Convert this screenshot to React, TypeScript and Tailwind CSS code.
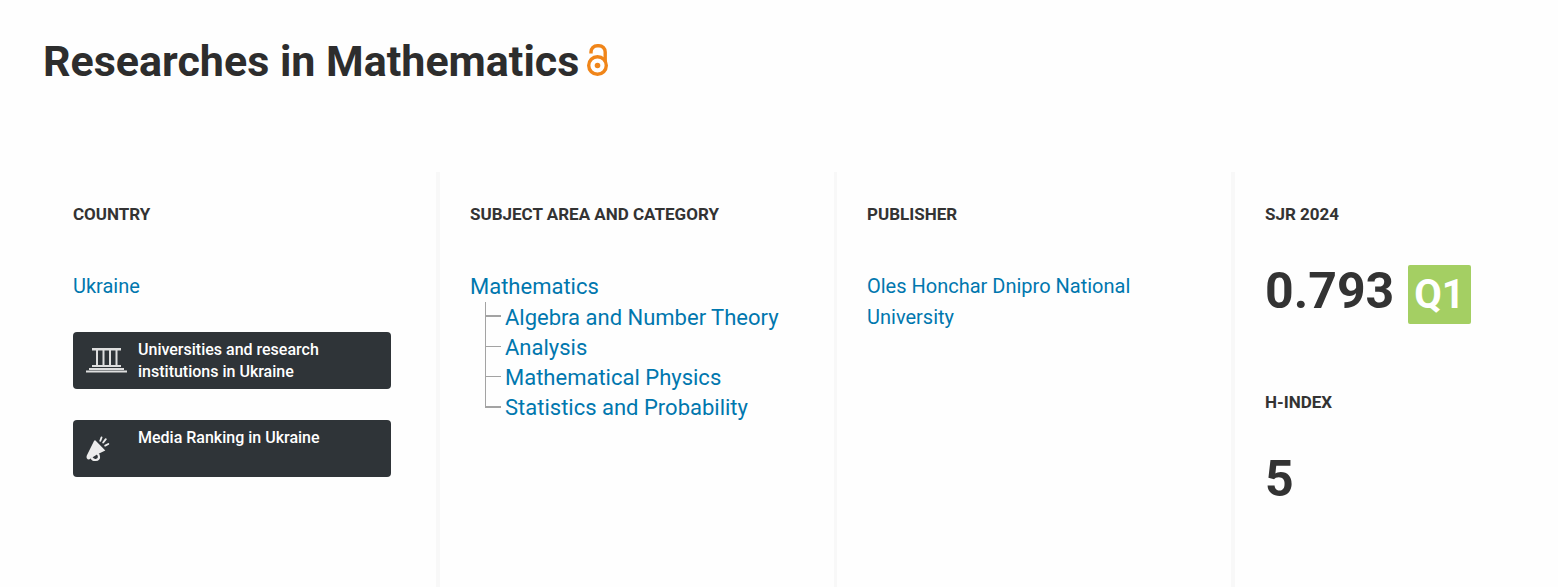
import type { ReactNode } from "react";

const categories = [
  "Algebra and Number Theory",
  "Analysis",
  "Mathematical Physics",
  "Statistics and Probability",
];

function OpenAccessIcon() {
  return (
    <svg width="22" height="34" viewBox="0 0 22 34" fill="none" role="img" aria-label="Open access">
      <g stroke="#f08519" strokeWidth="3.4">
        <circle cx="10.500" cy="21.500" r="8.800" />
        <path d="M4 9.500V8a6.300 6.300 0 0 1 6.300-6.300h1.600A6.300 6.300 0 0 1 18.200 8v9" />
      </g>
      <circle cx="10.500" cy="21.500" r="2.800" fill="#f08519" />
    </svg>
  );
}

function InstitutionIcon() {
  return (
    <svg width="42" height="26" viewBox="0 0 42 26" fill="#dedede" aria-hidden="true">
      <path d="M6 0h29v2.500H6zM6 17h29v2H6zM3 20h35v2H3zM0 22.500h41v2H0z" />
      <path d="M10 2h2v15h-2zM16.500 2h2v15h-2zM23 2h2v15h-2zM29.500 2h2v15h-2z" />
    </svg>
  );
}

function MegaphoneIcon() {
  return (
    <svg width="24" height="26" viewBox="0 0 24 26" fill="none" aria-hidden="true">
      <path
        d="M9.500 4.500 19.300 14.500 11 18.500 3.500 23.300Q1.800 24 .8 22.200 .2 21 .8 19.500L8 5Q8.700 4 9.500 4.500Z"
        fill="#ececec"
      />
      <path d="M5.500 21.500c1.500 3.800 7.500 3 7.500-.5 0-1.500-.6-2.700-1.700-3.500" stroke="#ececec" strokeWidth="2.200" />
      <path d="M14.300 4.800 15.500 1.500M17.200 6.500 19.800 3.200M19.200 9.600 22.300 8" stroke="#ececec" strokeWidth="1.900" strokeLinecap="round" />
    </svg>
  );
}

function Column({ children, className = "" }: { children: ReactNode; className?: string }) {
  return <div className={`border-[#f8f8f8] pt-[26px] pl-[30px] ${className}`}>{children}</div>;
}

function Heading({ children }: { children: ReactNode }) {
  return <h2 className="text-[17px] leading-8 font-bold uppercase">{children}</h2>;
}

function RankingLink({ icon, children }: { icon: ReactNode; children: ReactNode }) {
  return (
    <a
      href="#"
      className="flex h-[57px] rounded bg-[#2f3438] pl-[13px] text-base leading-[22px] font-medium text-white"
    >
      <span className="flex w-[52px] shrink-0 items-center">{icon}</span>
      <span className="max-w-[200px] pt-[7px]">{children}</span>
    </a>
  );
}

export default function App() {
  return (
    <main className="min-h-screen bg-[#fefefe] font-[Roboto,sans-serif] text-[#333]">
      <header className="flex items-center gap-2 px-[43px] pt-[30px]">
        <h1 className="text-[43px] leading-[62px] font-bold text-[#2d2d2d]">Researches in Mathematics</h1>
        <OpenAccessIcon />
      </header>

      <div className="mt-20 grid min-h-[415px] grid-cols-[397fr_397fr_398fr_323fr] pl-[43px]">
        <Column className="border-r-4 pr-[45px]">
          <Heading>Country</Heading>
          <p className="mt-[41px] text-[20px] leading-[31px]">
            <a href="#" className="text-[#0077ae]">Ukraine</a>
          </p>
          <div className="mt-[30px] flex flex-col gap-[31px]">
            <RankingLink icon={<InstitutionIcon />}>Universities and research institutions in Ukraine</RankingLink>
            <RankingLink icon={<MegaphoneIcon />}>Media Ranking in Ukraine</RankingLink>
          </div>
        </Column>

        <Column className="border-r-3 pr-[30px]">
          <Heading>Subject Area and Category</Heading>
          <div className="mt-[41px] text-[22px] leading-[31px]">
            <a href="#" className="text-[#0077ae]">Mathematics</a>
            <ul className="pl-[15px] leading-[30px]">
              {categories.map((name) => (
                <li
                  key={name}
                  className="relative h-[30px] pt-px pl-5 before:absolute before:top-0 before:left-0 before:h-full before:border-l before:border-[#a3a3a3] last:before:h-[14px] after:absolute after:top-[14px] after:left-0 after:w-4 after:border-t after:border-[#a3a3a3] first:after:top-[13px] first:after:border-t-2 last:after:border-t-2"
                >
                  <a href="#" className="text-[#0077ae]">{name}</a>
                </li>
              ))}
            </ul>
          </div>
        </Column>

        <Column className="border-r-4 pr-[45px]">
          <Heading>Publisher</Heading>
          <p className="mt-[41px] text-[20px] leading-[31px]">
            <a href="#" className="text-[#0077ae]">Oles Honchar Dnipro National University</a>
          </p>
        </Column>

        <Column>
          <Heading>SJR 2024</Heading>
          <p className="mt-[35px] flex items-start gap-[14px] text-[50px] leading-[53px] font-bold">
            <span>0.793</span>
            <span className="rounded-xs bg-[#a4cf63] px-[6px] text-[40px] leading-[59px] text-white">Q1</span>
          </p>
          <div className="mt-[62px]">
            <Heading>H-Index</Heading>
            <p className="mt-[35px] text-[50px] leading-[53px] font-bold">5</p>
          </div>
        </Column>
      </div>
    </main>
  );
}
